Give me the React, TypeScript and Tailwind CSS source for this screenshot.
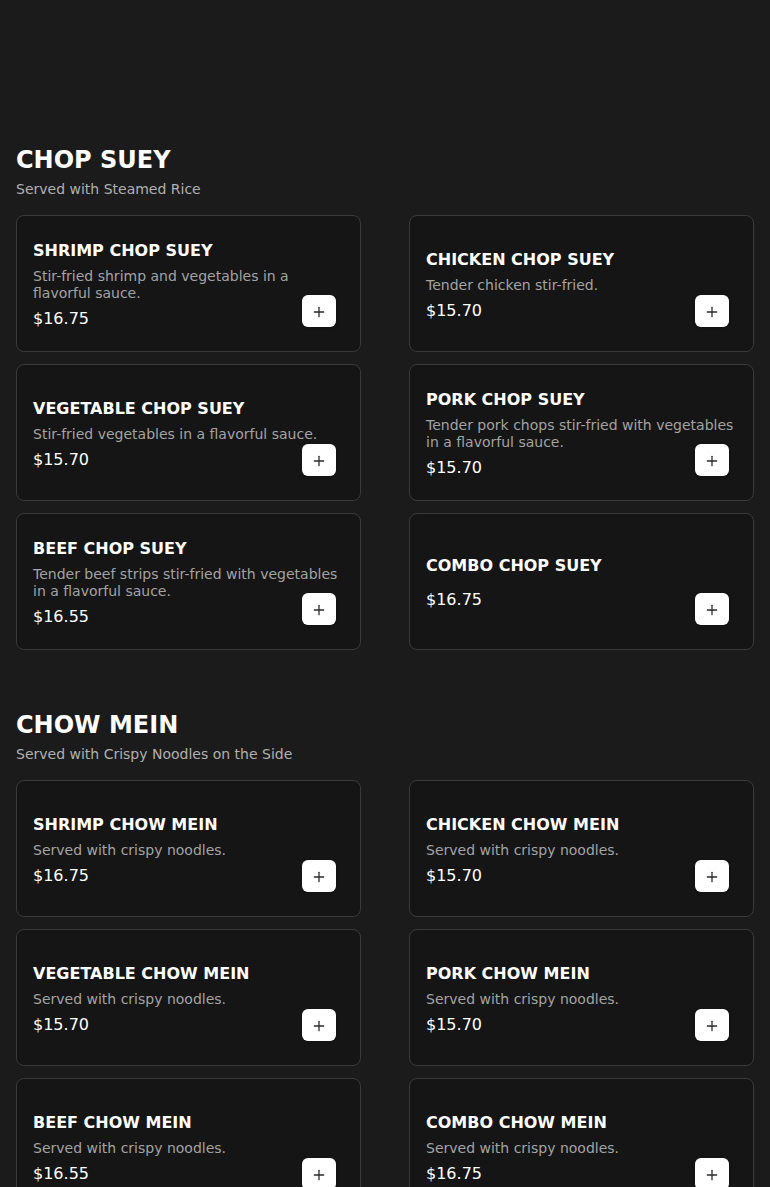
import { Plus } from 'lucide-react';

interface MenuItem {
    name: string;
    description?: string;
    price: string;
}

interface MenuSection {
    title: string;
    subtitle: string;
    items: MenuItem[];
}

const sections: MenuSection[] = [
    {
        title: 'CHOP SUEY',
        subtitle: 'Served with Steamed Rice',
        items: [
            { name: 'SHRIMP CHOP SUEY', description: 'Stir-fried shrimp and vegetables in a flavorful sauce.', price: '$16.75' },
            { name: 'CHICKEN CHOP SUEY', description: 'Tender chicken stir-fried.', price: '$15.70' },
            { name: 'VEGETABLE CHOP SUEY', description: 'Stir-fried vegetables in a flavorful sauce.', price: '$15.70' },
            { name: 'PORK CHOP SUEY', description: 'Tender pork chops stir-fried with vegetables in a flavorful sauce.', price: '$15.70' },
            { name: 'BEEF CHOP SUEY', description: 'Tender beef strips stir-fried with vegetables in a flavorful sauce.', price: '$16.55' },
            { name: 'COMBO CHOP SUEY', price: '$16.75' },
        ],
    },
    {
        title: 'CHOW MEIN',
        subtitle: 'Served with Crispy Noodles on the Side',
        items: [
            { name: 'SHRIMP CHOW MEIN', description: 'Served with crispy noodles.', price: '$16.75' },
            { name: 'CHICKEN CHOW MEIN', description: 'Served with crispy noodles.', price: '$15.70' },
            { name: 'VEGETABLE CHOW MEIN', description: 'Served with crispy noodles.', price: '$15.70' },
            { name: 'PORK CHOW MEIN', description: 'Served with crispy noodles.', price: '$15.70' },
            { name: 'BEEF CHOW MEIN', description: 'Served with crispy noodles.', price: '$16.55' },
            { name: 'COMBO CHOW MEIN', description: 'Served with crispy noodles.', price: '$16.75' },
        ],
    },
];

function ItemCard({ item }: { item: MenuItem }) {
    return (
        <div className="relative flex min-h-[137px] flex-col justify-center rounded-lg border border-[#3a3a3a] bg-[#151515] px-4 pt-[19px] pb-4">
            <h3 className="mb-[5px] text-base leading-6 font-bold text-white">{item.name}</h3>
            {item.description && (
                <p className="text-sm leading-[17px] text-[#a3a3a3]">{item.description}</p>
            )}
            <p className="mt-[5px] text-base leading-6 text-white">{item.price}</p>
            <button className="absolute right-6 bottom-6 flex h-8 w-[34px] items-center justify-center rounded-md bg-white text-[#2a2a2a] shadow">
                <Plus className="mt-[2px] h-4 w-4" strokeWidth={1.9} />
            </button>
        </div>
    );
}

export default function App() {
    return (
        <div className="min-h-screen bg-[#1b1b1b] px-4 pt-[144px] pb-10 font-['DejaVu_Sans',sans-serif]">
            {sections.map((section, index) => (
                <section key={section.title} className={index > 0 ? 'mt-[59px]' : ''}>
                    <h2 className="text-2xl leading-8 font-bold text-white">{section.title}</h2>
                    <p className="mt-[3px] text-sm leading-5 text-[#b0b0b0]">{section.subtitle}</p>
                    <div className="mt-4 grid grid-cols-2 gap-x-12 gap-y-3">
                        {section.items.map((item) => (
                            <ItemCard key={item.name} item={item} />
                        ))}
                    </div>
                </section>
            ))}
        </div>
    );
}
